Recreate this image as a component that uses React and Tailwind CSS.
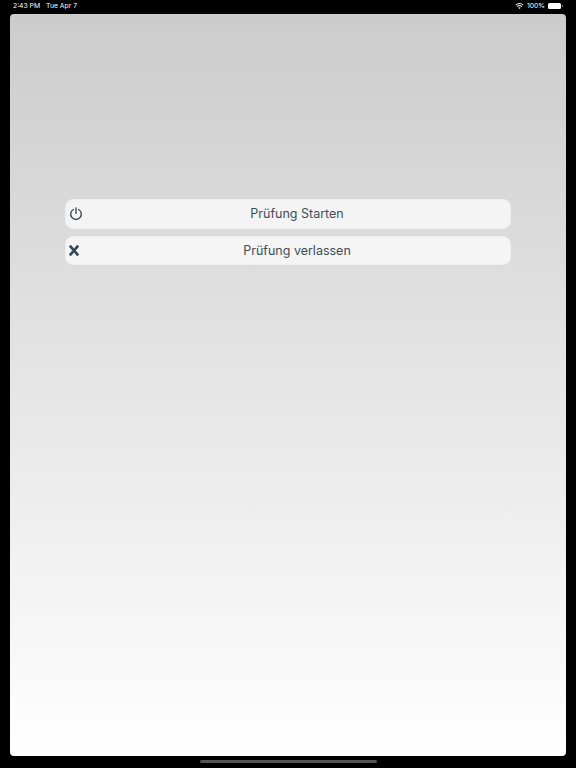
export default function App() {
  return (
    <div className="h-[768px] w-[576px] bg-black flex flex-col overflow-hidden font-['Inter',sans-serif]">
      <div className="h-[14px] flex items-start justify-between pl-[13px] pr-[13px] pt-[2px] text-white text-[6.8px] leading-[8px]">
        <div className="flex gap-[6px]">
          <span>2:43 PM</span>
          <span>Tue Apr 7</span>
        </div>
        <div className="flex items-center gap-[2px]">
          <svg width="9" height="7" viewBox="0 0 18 14" fill="white">
            <path d="M9 2.2c2.6 0 5 1 6.8 2.7l1.3-1.4A11.8 11.8 0 0 0 9 .2 11.8 11.8 0 0 0 .9 3.5l1.3 1.4A9.8 9.8 0 0 1 9 2.2z" />
            <path d="M9 6.2c1.5 0 2.9.6 4 1.6l1.3-1.4A7.7 7.7 0 0 0 9 4.2c-2 0-3.9.8-5.3 2.2L5 7.8c1.1-1 2.5-1.6 4-1.6z" />
            <path d="M9 8.3c-1 0-1.8.4-2.5 1L9 12l2.5-2.7c-.7-.6-1.5-1-2.5-1z" />
          </svg>
          <span className="ml-[1px]">100%</span>
          <div className="ml-[1px] flex items-center">
            <div className="h-[6px] w-[13px] rounded-[1.5px] bg-white" />
            <div className="ml-[1px] h-[2px] w-[1px] bg-white/50" />
          </div>
        </div>
      </div>
      <div className="mx-[10px] h-[742px] w-[556px] rounded-[4px] bg-gradient-to-b from-[#cccccc] to-white px-[55px] pt-[185px] flex flex-col gap-[7px]">
        <button className="relative h-[30px] w-[446px] rounded-[8px] bg-[#f4f4f4] border border-[#eeeeee] text-[#3e4c59] text-[12.5px] flex items-center justify-center">
          <svg className="absolute left-[3px] top-[6px]" width="14" height="15" viewBox="0 0 15 15" fill="none" stroke="#3e4c59" strokeWidth="1.5" strokeLinecap="round">
            <path d="M4.7 3.2a5.7 5.7 0 1 0 5.6 0" />
            <path d="M7.5 1.5v6" />
          </svg>
          <span className="ml-[18px] pt-[1px]">Prüfung Starten</span>
        </button>
        <button className="relative h-[29px] w-[446px] rounded-[8px] bg-[#f5f5f5] border border-[#eeeeee] text-[#3e4c59] text-[12.5px] flex items-center justify-center">
          <svg className="absolute left-[3px] top-[8px]" width="10" height="11" viewBox="0 0 10 11" fill="none" stroke="#34495e" strokeWidth="2.6">
            <path d="M.8.6l8.4 9.8M9.2.6L.8 10.4" />
          </svg>
          <span className="ml-[18px] pt-[1px]">Prüfung verlassen</span>
        </button>
      </div>
      <div className="flex-1 flex justify-center pt-[4px]">
        <div className="h-[3px] w-[177px] rounded-full bg-[#555555]" />
      </div>
    </div>
  );
}
